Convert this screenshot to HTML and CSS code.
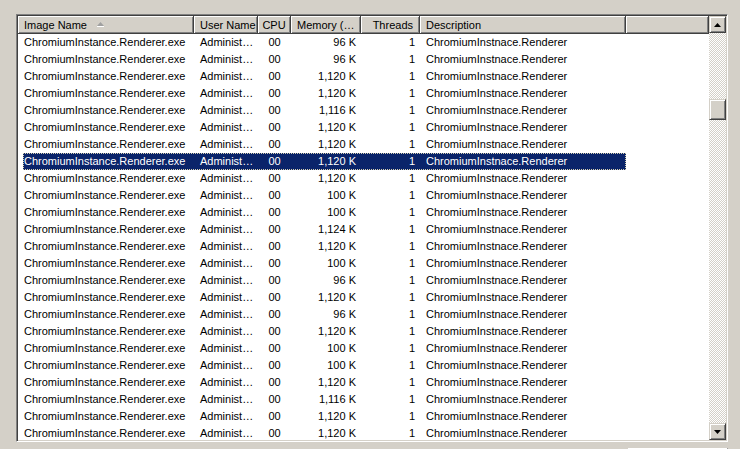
FILE: index.html
```html
<!DOCTYPE html>
<html>
<head>
<meta charset="utf-8">
<link rel="stylesheet" href="styles.css">
</head>
<body>
<div class="window">
  <div class="listbox">
    <div class="content">
      <div class="header">
        <div class="hcell c-name">Image Name <svg class="sort" width="7" height="5" viewBox="0 0 7 5"><polygon points="3.5,0 7,4 0,4" fill="#a0a0a0"/><rect x="0" y="4" width="7" height="1" fill="#ffffff"/></svg></div>
        <div class="hcell c-user">User Name</div>
        <div class="hcell c-cpu">CPU</div>
        <div class="hcell c-mem">Memory (…</div>
        <div class="hcell c-thr right">Threads</div>
        <div class="hcell c-desc">Description</div>
        <div class="hcell c-rest"></div>
      </div>
      <div class="rows" id="rows"></div>
    </div>
    <div class="scrollbar">
      <div class="sbtn"><svg width="7" height="4" viewBox="0 0 7 4"><polygon points="3.5,0 7,4 0,4" fill="#000"/></svg></div>
      <div class="track">
        <div class="thumb"></div>
      </div>
      <div class="sbtn"><svg width="7" height="4" viewBox="0 0 7 4"><polygon points="0,0 7,0 3.5,4" fill="#000"/></svg></div>
    </div>
  </div>
  <div class="below">
    <div class="btn-edge"></div>
  </div>
</div>
<script src="app.js"></script>
</body>
</html>
```
FILE: app.js
```js
var mem = ["96 K","96 K","1,120 K","1,120 K","1,116 K","1,120 K","1,120 K","1,120 K","1,120 K","100 K","100 K","1,124 K","1,120 K","100 K","96 K","1,120 K","96 K","1,120 K","100 K","100 K","1,120 K","1,116 K","1,120 K","1,120 K"];
var html = "";
for (var i = 0; i < mem.length; i++) {
  html += '<div class="row"><div class="rowin' + (i === 7 ? ' sel' : '') + '">' +
    '<div class="cell d-name">ChromiumInstance.Renderer.exe</div>' +
    '<div class="cell c-user">Administ…</div>' +
    '<div class="cell c-cpu">00</div>' +
    '<div class="cell c-mem right">' + mem[i] + '</div>' +
    '<div class="cell c-thr right">1</div>' +
    '<div class="cell c-desc">ChromiumInstnace.Renderer</div>' +
    '</div></div>';
}
document.getElementById("rows").innerHTML = html;
```
FILE: styles.css
```css
html, body {
  margin: 0;
  padding: 0;
  width: 740px;
  height: 449px;
  overflow: hidden;
  background: #d4d0c8;
  font-family: "Liberation Sans", Arial, sans-serif;
  font-size: 11px;
  color: #000;
}
.window {
  padding: 14px 0 0 16px;
}
.listbox {
  width: 708px;
  height: 424px;
  display: flex;
  border-top: 1px solid #808080;
  border-left: 1px solid #808080;
  border-right: 1px solid #ffffff;
  border-bottom: 1px solid #ffffff;
  box-shadow: inset 1px 1px 0 #404040, inset -1px -1px 0 #d4d0c8;
  padding: 1px;
}
.content {
  width: 691px;
  height: 424px;
  background: #fff;
  overflow: hidden;
}
.header {
  display: flex;
  height: 18px;
}
.hcell {
  box-sizing: border-box;
  height: 18px;
  line-height: 16px;
  padding: 0 6px;
  background: #d4d0c8;
  border-right: 1px solid #404040;
  border-bottom: 1px solid #404040;
  box-shadow: inset 1px 1px 0 #ffffff, inset -1px -1px 0 #808080;
  white-space: nowrap;
  overflow: hidden;
  display: flex;
  align-items: center;
  flex: none;
}
.hcell.right { justify-content: flex-end; }
.hcell.c-cpu { justify-content: center; padding: 0; }
.hcell.c-user { padding-right: 0; }
.hcell.c-mem { padding-right: 0; }
.sort { margin-left: 10px; margin-top: -1px; }
.c-name { width: 176px; }
.c-user { width: 64px; }
.c-cpu { width: 33px; }
.c-mem { width: 70px; }
.c-thr { width: 59px; }
.c-desc { width: 206px; }
.c-rest { width: 83px; padding: 0; }
.d-name { width: 171px; }
.row {
  height: 17px;
  padding-left: 5px;
}
.rowin {
  display: flex;
  width: 603px;
  height: 17px;
  box-sizing: border-box;
}
.rowin.sel {
  background: #0a246a;
  color: #fff;
  outline: 1px dotted #d6d0b0;
  outline-offset: -1px;
}
.cell {
  box-sizing: border-box;
  height: 17px;
  line-height: 17px;
  padding: 0 6px;
  white-space: nowrap;
  overflow: hidden;
  flex: none;
}
.cell.d-name { padding-left: 1px; }
.cell.right { text-align: right; padding-right: 5px; }
.cell.c-cpu { text-align: center; padding: 0; }
.cell.c-user { padding-left: 6px; padding-right: 0; }
.scrollbar {
  width: 17px;
  height: 424px;
  display: flex;
  flex-direction: column;
}
.sbtn {
  box-sizing: border-box;
  width: 17px;
  height: 17px;
  flex: none;
  background: #d4d0c8;
  border-top: 1px solid #d4d0c8;
  border-left: 1px solid #d4d0c8;
  border-right: 1px solid #404040;
  border-bottom: 1px solid #404040;
  box-shadow: inset 1px 1px 0 #ffffff, inset -1px -1px 0 #808080;
  display: flex;
  align-items: center;
  justify-content: center;
}
.sbtn svg { display: block; }
.track {
  flex: 1;
  background-image: conic-gradient(#d4d0c8 25%, #ffffff 0 50%, #d4d0c8 0 75%, #ffffff 0);
  background-size: 2px 2px;
  padding-top: 66px;
}
.thumb {
  box-sizing: border-box;
  width: 17px;
  height: 21px;
  background: #d4d0c8;
  border-top: 1px solid #d4d0c8;
  border-left: 1px solid #d4d0c8;
  border-right: 1px solid #404040;
  border-bottom: 1px solid #404040;
  box-shadow: inset 1px 1px 0 #ffffff, inset -1px -1px 0 #808080;
}
.below {
  width: 712px;
  display: flex;
  justify-content: flex-end;
  margin-top: 6px;
}
.btn-edge {
  width: 100px;
  height: 20px;
  box-sizing: border-box;
  border-top: 1px solid #ffffff;
  border-left: 1px solid #ffffff;
  border-right: 1px solid #404040;
}
```
